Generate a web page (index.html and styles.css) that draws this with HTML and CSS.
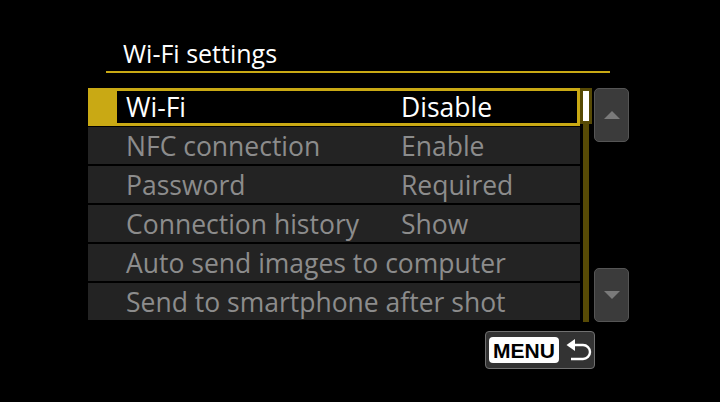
FILE: index.html
```html
<!DOCTYPE html>
<html lang="en">

<head>
  <meta charset="UTF-8">
  <meta name="viewport" content="width=device-width, initial-scale=1.0">
  <title>Wi-Fi settings</title>
  <link rel="stylesheet" href="styles.css">
</head>

<body>
  <div class="screen">
    <div class="titleBar">
      <h1 class="title">Wi-Fi settings</h1>
    </div>

    <div class="menuArea">
      <div class="menuList">
        <div class="row selected">
          <span class="label">Wi-Fi</span>
          <span class="value">Disable</span>
        </div>
        <div class="row">
          <span class="label">NFC connection</span>
          <span class="value">Enable</span>
        </div>
        <div class="row">
          <span class="label">Password</span>
          <span class="value">Required</span>
        </div>
        <div class="row">
          <span class="label">Connection history</span>
          <span class="value">Show</span>
        </div>
        <div class="row">
          <span class="label">Auto send images to computer</span>
        </div>
        <div class="row">
          <span class="label">Send to smartphone after shot</span>
        </div>
      </div>

      <div class="scrollTrack">
        <div class="scrollThumb"></div>
      </div>

      <div class="pageButtons">
        <div class="pageBtn"><span class="arrow up"></span></div>
        <div class="pageBtn"><span class="arrow down"></span></div>
      </div>
    </div>

    <div class="footer">
      <div class="menuBtn">
        <span class="menuTag">MENU</span>
        <svg class="backIcon" width="28" height="24" viewBox="0 0 28 24">
          <path d="M4 7 H18 A7 7 0 0 1 18 21 H6" fill="none" stroke="#fff" stroke-width="2.4" />
          <path d="M1.5 7 L10 1 L10 13 Z" fill="#fff" />
        </svg>
      </div>
    </div>
  </div>
</body>

</html>
```

FILE: styles.css
```css
:root {
  --yellow: #c9a914;
  --olive: #574a05;
  --rowBg: #232323;
  --dimText: #8c8c8c;
}

body {
  margin: 0;
  background: #000;
  font-family: "Open Sans", "Noto Sans", sans-serif;
  color: #fff;
}

.screen {
  width: 720px;
  height: 402px;
  overflow: hidden;
}

.titleBar {
  margin: 0 110px 0 106px;
  padding: 36px 0 0 17px;
  height: 35px;
  border-bottom: 2px solid var(--yellow);
}

.title {
  margin: 0;
  font-size: 25px;
  font-weight: normal;
  line-height: 34px;
}

.menuArea {
  display: flex;
  margin: 15px 0 0 88px;
  height: 234px;
}

.menuList {
  width: 492px;
}

.row {
  display: flex;
  align-items: center;
  height: 37px;
  margin-bottom: 2px;
  background: var(--rowBg);
  color: var(--dimText);
  font-size: 26.5px;
  box-sizing: border-box;
  padding-left: 38px;
  white-space: nowrap;
}

.row .label {
  width: 275px;
}

.row.selected {
  background: #000;
  color: #fff;
  border: 3px solid var(--yellow);
  border-left: 29px solid var(--yellow);
  padding-left: 9px;
  height: 38px;
  margin-bottom: 1px;
}

.scrollTrack {
  width: 12px;
  display: flex;
  justify-content: center;
  position: relative;
}

.scrollTrack::before {
  content: "";
  width: 6px;
  height: 100%;
  background: var(--olive);
}

.scrollThumb {
  position: absolute;
  top: 0;
  left: 0;
  width: 6px;
  height: 30px;
  background: #fff;
  border: 3px solid var(--olive);
}

.pageButtons {
  margin-left: 2px;
  display: flex;
  flex-direction: column;
  justify-content: space-between;
}

.pageBtn {
  width: 33px;
  height: 52px;
  background: #3b3b3b;
  border: 1px solid #555;
  border-radius: 5px;
  display: flex;
  justify-content: center;
  align-items: center;
}

.arrow {
  width: 0;
  height: 0;
  border-left: 8px solid transparent;
  border-right: 8px solid transparent;
}

.arrow.up {
  border-bottom: 8px solid #7a7a7a;
}

.arrow.down {
  border-top: 8px solid #7a7a7a;
}

.footer {
  display: flex;
  margin: 9px 0 0 485px;
}

.menuBtn {
  width: 110px;
  height: 38px;
  background: #333;
  border: 1px solid #707070;
  border-radius: 4px;
  display: flex;
  align-items: center;
  padding-left: 3px;
  box-sizing: border-box;
}

.menuTag {
  background: #fff;
  color: #000;
  font-family: "Liberation Sans", sans-serif;
  font-weight: bold;
  font-size: 21px;
  width: 70px;
  height: 26px;
  line-height: 27px;
  text-align: center;
  border-radius: 4px;
}

.backIcon {
  margin-left: 6px;
}
```
